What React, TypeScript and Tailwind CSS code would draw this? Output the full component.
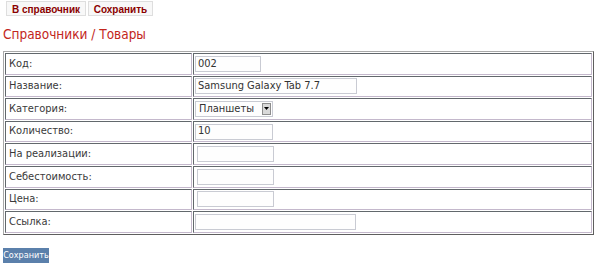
import React from 'react';

const font = "font-['DejaVu_Sans_Condensed','Liberation_Sans',sans-serif]";

function TextInput({ value = '', className = '' }: { value?: string; className?: string }) {
  return (
    <input
      type="text"
      defaultValue={value}
      className={`h-[16px] border border-[#c9cbd3] bg-[#fefefe] px-[2px] text-[11px] text-[#333] outline-none ${font} ${className}`}
    />
  );
}

function CategorySelect() {
  return (
    <div className="flex h-[16px] w-[78px] items-center justify-between border border-[#c9cbd3] bg-[#fefefe] pl-[3px] pr-[1px] text-[11px] text-[#333]">
      <span>Планшеты</span>
      <span className="flex h-[12px] w-[9px] items-center justify-center border border-[#8d8d8d] bg-[#d9d9d9]">
        <svg width="5" height="3" viewBox="0 0 5 3">
          <path d="M0 0h5L2.5 3z" fill="#000" />
        </svg>
      </span>
    </div>
  );
}

export default function App() {
  const rows: { label: string; field: React.ReactNode }[] = [
    { label: 'Код:', field: <TextInput value="002" className="w-[66px]" /> },
    { label: 'Название:', field: <TextInput value="Samsung Galaxy Tab 7.7" className="w-[162px]" /> },
    { label: 'Категория:', field: <CategorySelect /> },
    { label: 'Количество:', field: <TextInput value="10" className="w-[78px]" /> },
    { label: 'На реализации:', field: <TextInput className="ml-[2px] w-[77px]" /> },
    { label: 'Себестоимость:', field: <TextInput className="ml-[2px] w-[77px]" /> },
    { label: 'Цена:', field: <TextInput className="ml-[2px] w-[77px]" /> },
    { label: 'Ссылка:', field: <TextInput className="w-[161px]" /> },
  ];

  return (
    <div className={`h-[267px] w-[600px] bg-white ${font} text-[11px] text-[#3a3a3a]`}>
      {/* Toolbar */}
      <div className="flex gap-[2px] pt-[1px] pl-[6px]">
        <button className="h-[15px] w-[80px] border border-[#dedede] bg-[#f8f8f8] font-['Liberation_Sans',sans-serif] text-[10px] font-bold text-[#8b0000]">
          В справочник
        </button>
        <button className="h-[15px] w-[65px] border border-[#dedede] bg-[#f8f8f8] font-['Liberation_Sans',sans-serif] text-[10px] font-bold text-[#8b0000]">
          Сохранить
        </button>
      </div>

      {/* Title */}
      <h1 className="mt-[10px] pl-[3px] text-[13.5px] leading-[17px] text-[#c3261c]">Справочники / Товары</h1>

      {/* Form */}
      <table className="mt-[8px] ml-[3px] w-[591px] border-separate border-spacing-[1px] border border-t-[#a9a9a9] border-l-[#a9a9a9] border-b-[#5e5e5e] border-r-[#5e5e5e]">
        <tbody>
          {rows.map((row, index) => (
            <tr key={index}>
              <td className="h-[21.6px] w-[187px] border border-t-[#62686c] border-l-[#62686c] border-b-[#c4b8cc] border-r-[#c4b8cc] pl-[3px] align-middle">
                {row.label}
              </td>
              <td className="border border-t-[#62686c] border-l-[#62686c] border-b-[#c4b8cc] border-r-[#c4b8cc] pl-[1px] align-middle">
                {row.field}
              </td>
            </tr>
          ))}
        </tbody>
      </table>

      <button className="mt-[13px] ml-[3px] h-[15px] w-[46px] bg-[#5b80ab] text-[9px] text-white">Сохранить</button>
    </div>
  );
}
